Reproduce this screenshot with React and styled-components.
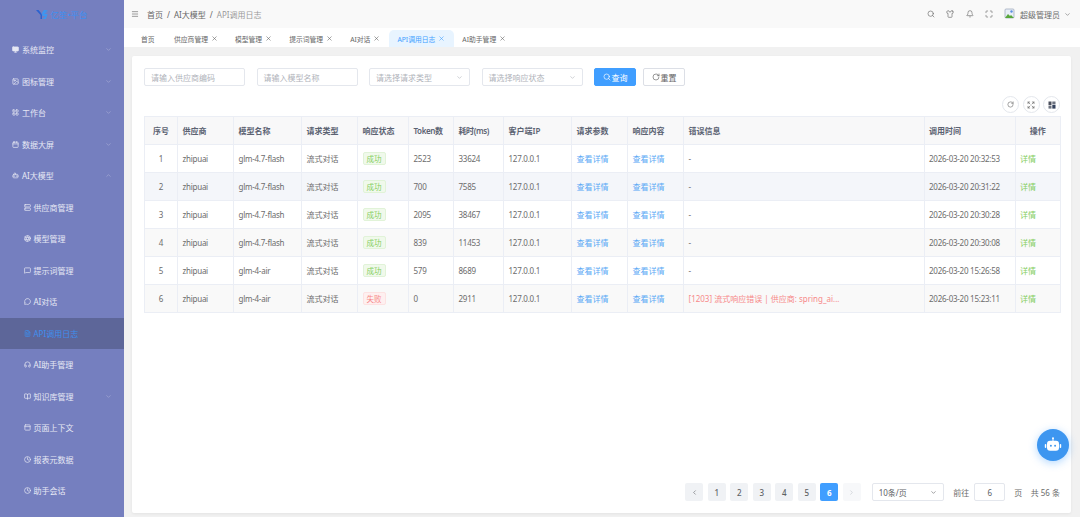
import React from 'react'
import styled, { createGlobalStyle } from 'styled-components'
import {
  Monitor, Image, LayoutGrid, Calendar, Bot, ChevronDown, ChevronUp, ChevronLeft, ChevronRight,
  Server, Aperture, MessageSquare, MessageCircle, FileText, Headphones, BookOpen, PanelTop,
  Clock, Search, Shirt, Bell, Maximize, RotateCw, X, Menu, Expand
} from 'lucide-react'

const GlobalStyle = createGlobalStyle`
  html, body { margin: 0; padding: 0; height: 100%; }
  body {
    font-family: "Noto Sans", "Noto Sans CJK SC", sans-serif;
    font-size: 8px;
    color: #6c6c6c;
    background: #f1f1f1;
    overflow: hidden;
  }
  * { box-sizing: border-box; }
`

const Page = styled.div`
  display: flex;
  width: 1080px;
  height: 517px;
`

const Sidebar = styled.aside`
  width: 124px;
  flex: none;
  background: #757fbf;
  color: #e6e8f4;
`

const Logo = styled.div`
  height: 34px;
  display: flex;
  align-items: center;
  justify-content: center;
  gap: 2px;
  padding-bottom: 6px;
  color: #3d8ff0;
  font-size: 8.5px;
`

const MenuRow = styled.div`
  height: 31.5px;
  display: flex;
  align-items: center;
  gap: 3px;
  padding-left: ${p => (p.$child ? 23.5 : 12)}px;
  padding-right: 12px;
  background: ${p => (p.$active ? '#5d6699' : 'transparent')};
  color: ${p => (p.$active ? '#3d8ff0' : '#e6e8f4')};
`

const MenuLabel = styled.span`
  flex: 1;
  white-space: nowrap;
`

const FilledMonitor = styled(Monitor)`
  fill: currentColor;
`

const Main = styled.div`
  flex: 1;
  min-width: 0;
  display: flex;
  flex-direction: column;
`

const Header = styled.header`
  height: 28px;
  flex: none;
  background: #f9f9f9;
  display: flex;
  align-items: center;
  padding: 0 9px 0 7px;
`

const Crumbs = styled.div`
  display: flex;
  align-items: center;
  gap: 4px;
  margin-left: 8px;
  flex: 1;
`

const Crumb = styled.span`
  color: ${p => (p.$last ? '#999' : '#666')};
`

const HeadIcons = styled.div`
  display: flex;
  align-items: center;
  gap: 11.5px;
  margin-right: 11px;
`

const User = styled.div`
  display: flex;
  align-items: center;
  gap: 4px;
`

const Tabs = styled.nav`
  height: 19px;
  flex: none;
  background: #fff;
  display: flex;
  align-items: flex-end;
  padding-left: 8.5px;
  font-size: 6.8px;
`

const Tab = styled.div`
  height: 17px;
  min-width: 33px;
  display: flex;
  align-items: center;
  gap: 3px;
  padding: 0 8.5px;
  white-space: nowrap;
  border-radius: 5px 5px 0 0;
  background: ${p => (p.$active ? '#e8f4ff' : 'transparent')};
  color: ${p => (p.$active ? '#409eff' : '#666')};
`

const Card = styled.main`
  height: 457px;
  margin: 9px 9px 0 8px;
  padding: 12px 11px 12px 12px;
  background: #fff;
  border-radius: 2px;
  box-shadow: 0 1px 3px rgba(0, 0, 0, 0.06);
  display: flex;
  flex-direction: column;
`

const Filters = styled.div`
  display: flex;
  gap: 11.5px;
  height: 18px;
`

const Field = styled.div`
  width: 101px;
  height: 18px;
  display: flex;
  align-items: center;
  justify-content: space-between;
  padding: 0 6px;
  border: 1px solid #e4e7ed;
  border-radius: 2px;
  color: #b0b3ba;
`

const Button = styled.button`
  height: 18px;
  width: 42px;
  padding: 0;
  display: flex;
  align-items: center;
  justify-content: center;
  gap: 1px;
  font: inherit;
  border-radius: 2px;
  border: 1px solid ${p => (p.$primary ? '#409eff' : '#dcdfe6')};
  background: ${p => (p.$primary ? '#409eff' : '#fff')};
  color: ${p => (p.$primary ? '#fff' : '#666')};
`

const ResetButton = styled(Button)`
  margin-left: -4.5px;
`

const Tools = styled.div`
  display: flex;
  justify-content: flex-end;
  gap: 3.5px;
  margin-top: 10px;
`

const ToolButton = styled.div`
  width: 17px;
  height: 17px;
  border: 1px solid #e4e7ed;
  border-radius: 50%;
  display: flex;
  align-items: center;
  justify-content: center;
  color: #666;
`

const Table = styled.table`
  width: 916px;
  margin-top: 2.5px;
  border-collapse: collapse;
  table-layout: fixed;
`

const Th = styled.th`
  height: 28px;
  padding: 0 4.5px;
  background: #f8f8f9;
  border: 1px solid #ebeef5;
  color: #5b6272;
  font-weight: 600;
  letter-spacing: ${p => (p.$tight ? '-0.4px' : '0')};
  text-align: ${p => (p.$center ? 'center' : 'left')};
`

const Row = styled.tr`
  background: ${p => (p.$tone === 'blue' ? '#f4f6fa' : p.$tone === 'grey' ? '#f9f9f9' : '#fff')};
`

const Td = styled.td`
  height: 28px;
  padding: 0 4.5px;
  border: 1px solid #ebeef5;
  color: ${p => p.$color || '#6c6c6c'};
  letter-spacing: ${p => (p.$tight ? '-0.25px' : '0')};
  text-align: ${p => (p.$center ? 'center' : 'left')};
  white-space: nowrap;
  overflow: hidden;
`

const Tag = styled.span`
  display: inline-block;
  width: 23px;
  height: 13px;
  line-height: 12px;
  text-align: center;
  border-radius: 2px;
  font-size: 7.5px;
  background: ${p => (p.$fail ? '#fef0f0' : '#f0f9eb')};
  border: 1px solid ${p => (p.$fail ? '#fde2e2' : '#e1f3d8')};
  color: ${p => (p.$fail ? '#f78989' : '#85ce61')};
`

const Pager = styled.div`
  margin-top: auto;
  display: flex;
  align-items: center;
  justify-content: flex-end;
  height: 18px;
`

const PageButtons = styled.div`
  display: flex;
  gap: 4.5px;
  margin-right: 11px;
`

const PageBtn = styled.div`
  width: 18px;
  height: 18px;
  display: flex;
  align-items: center;
  justify-content: center;
  border-radius: 2px;
  font-weight: ${p => (p.$active ? 700 : 500)};
  background: ${p => (p.$active ? '#409eff' : p.$disabled ? '#f7f8fa' : '#f0f2f5')};
  color: ${p => (p.$active ? '#fff' : p.$disabled ? '#c0c4cc' : '#606266')};
`

const SizeSelect = styled(Field)`
  width: 72.5px;
  color: #606266;
  margin-right: 9px;
`

const JumpInput = styled(Field)`
  width: 31px;
  justify-content: center;
  color: #606266;
  margin: 0 9px 0 5px;
`

const TotalText = styled.span`
  margin-left: 8.5px;
`

const Fab = styled.div`
  position: absolute;
  left: 1037px;
  top: 429px;
  width: 32px;
  height: 32px;
  border-radius: 50%;
  background: #3d96f0;
  box-shadow: 0 2px 8px rgba(64, 158, 255, 0.4);
  display: flex;
  align-items: center;
  justify-content: center;
`

const columns = [
  ['序号', 33, true], ['供应商', 56], ['模型名称', 68], ['请求类型', 56], ['响应状态', 51],
  ['Token数', 45, false, true], ['耗时(ms)', 50, false, true], ['客户端IP', 68], ['请求参数', 56], ['响应内容', 56],
  ['错误信息', 240.5], ['调用时间', 91], ['操作', 45.5, true]
]

const rows = [
  ['glm-4.7-flash', 2523, 33624, '-', '2026-03-20 20:32:53'],
  ['glm-4.7-flash', 700, 7585, '-', '2026-03-20 20:31:22'],
  ['glm-4.7-flash', 2095, 38467, '-', '2026-03-20 20:30:28'],
  ['glm-4.7-flash', 839, 11453, '-', '2026-03-20 20:30:08'],
  ['glm-4-air', 579, 8689, '-', '2026-03-20 15:26:58'],
  ['glm-4-air', 0, 2911, '[1203] 流式响应错误 | 供应商: spring_ai...', '2026-03-20 15:23:11']
]

const menu = [
  [FilledMonitor, '系统监控', 'down'],
  [Image, '图标管理', 'down'],
  [LayoutGrid, '工作台', 'down'],
  [Calendar, '数据大屏', 'down'],
  [Bot, 'AI大模型', 'up'],
  [Server, '供应商管理', null, true],
  [Aperture, '模型管理', null, true],
  [MessageSquare, '提示词管理', null, true],
  [MessageCircle, 'AI对话', null, true],
  [FileText, 'API调用日志', null, true, true],
  [Headphones, 'AI助手管理', null, true],
  [BookOpen, '知识库管理', 'down', true],
  [PanelTop, '页面上下文', null, true],
  [Clock, '报表元数据', null, true],
  [Clock, '助手会话', null, true]
]

const tabs = [
  ['首页'], ['供应商管理', true], ['模型管理', true], ['提示词管理', true],
  ['AI对话', true], ['API调用日志', true, true], ['AI助手管理', true]
]

function LogoMark() {
  return (
    <svg width="12" height="9" viewBox="0 0 12 9">
      <path d="M0 0h2.5l2.5 3 1 2v4H4.5V5z" fill="#2b62cf" />
      <path d="M6 3l2-3h4L9 1.5h3L8 4h3.5L10 9H6.5l3-3H6.5z" fill="#3d96f0" />
    </svg>
  )
}

function BrokenImage() {
  return (
    <svg width="12" height="13" viewBox="0 0 12 13">
      <rect x="1" y="1" width="9" height="9" rx="1" fill="#e8eef8" stroke="#9aa5b8" strokeWidth="0.7" />
      <path d="M1 10l3-4 2 2 1-1 3 3z" fill="#58a73c" />
      <circle cx="7.5" cy="3.5" r="1.2" fill="#5b8fe0" />
    </svg>
  )
}

function ColumnsIcon() {
  return (
    <svg width="8" height="8" viewBox="0 0 8 8">
      <rect x="0.5" y="0.5" width="3" height="3.5" fill="#4a4f5c" />
      <rect x="0.5" y="4.6" width="3" height="3" fill="#6d7380" />
      <rect x="4.3" y="0.5" width="3.2" height="2.6" fill="#6d7380" />
      <rect x="4.3" y="3.7" width="3.2" height="3.9" fill="#33415c" />
    </svg>
  )
}

function RobotIcon() {
  return (
    <svg width="18" height="18" viewBox="0 0 18 18">
      <circle cx="9" cy="2.2" r="1" fill="#fff" />
      <rect x="8.5" y="2.5" width="1" height="2.5" fill="#fff" />
      <rect x="3" y="4.8" width="12" height="10" rx="3" fill="#fff" />
      <rect x="0.8" y="8" width="1.5" height="4" rx="0.75" fill="#fff" />
      <rect x="15.7" y="8" width="1.5" height="4" rx="0.75" fill="#fff" />
      <circle cx="6.9" cy="9.8" r="0.95" fill="#3d96f0" />
      <circle cx="11.1" cy="9.8" r="0.95" fill="#3d96f0" />
    </svg>
  )
}

export default function App() {
  return (
    <Page>
      <GlobalStyle />
      <Sidebar>
        <Logo><LogoMark />亿笙•平台</Logo>
        {menu.map(([Icon, label, arrow, child, active]) => (
          <MenuRow key={label} $child={child} $active={active}>
            <Icon size={7} strokeWidth={2.4} />
            <MenuLabel>{label}</MenuLabel>
            {arrow === 'down' && <ChevronDown size={7} color="#aab0d8" />}
            {arrow === 'up' && <ChevronUp size={7} color="#aab0d8" />}
          </MenuRow>
        ))}
      </Sidebar>
      <Main>
        <Header>
          <Menu size={8} />
          <Crumbs>
            <Crumb>首页</Crumb><Crumb>/</Crumb><Crumb>AI大模型</Crumb><Crumb>/</Crumb><Crumb $last>API调用日志</Crumb>
          </Crumbs>
          <HeadIcons>
            <Search size={8} /><Shirt size={8} /><Bell size={8} /><Maximize size={8} />
          </HeadIcons>
          <User>
            <BrokenImage />
            超级管理员
            <ChevronDown size={7} />
          </User>
        </Header>
        <Tabs>
          {tabs.map(([label, closable, active]) => (
            <Tab key={label} $active={active}>
              {label}
              {closable && <X size={7} />}
            </Tab>
          ))}
        </Tabs>
        <Card>
          <Filters>
            <Field>请输入供应商编码</Field>
            <Field>请输入模型名称</Field>
            <Field>请选择请求类型<ChevronDown size={7} /></Field>
            <Field>请选择响应状态<ChevronDown size={7} /></Field>
            <Button $primary><Search size={8} />查询</Button>
            <ResetButton><RotateCw size={8} />重置</ResetButton>
          </Filters>
          <Tools>
            <ToolButton><RotateCw size={7} /></ToolButton>
            <ToolButton><Expand size={8} /></ToolButton>
            <ToolButton><ColumnsIcon /></ToolButton>
          </Tools>
          <Table>
            <colgroup>
              {columns.map(([name, width]) => <col key={name} width={width} />)}
            </colgroup>
            <thead>
              <tr>
                {columns.map(([name, , center, tight]) => <Th key={name} $center={center} $tight={tight}>{name}</Th>)}
              </tr>
            </thead>
            <tbody>
              {rows.map(([model, token, ms, err, time], i) => (
                <Row key={time} $tone={i === 1 ? 'blue' : i === 3 || i === 5 ? 'grey' : 'white'}>
                  <Td $center>{i + 1}</Td>
                  <Td $tight>zhipuai</Td>
                  <Td $tight>{model}</Td>
                  <Td>流式对话</Td>
                  <Td><Tag $fail={i === 5}>{i === 5 ? '失败' : '成功'}</Tag></Td>
                  <Td $tight>{token}</Td>
                  <Td $tight>{ms}</Td>
                  <Td $tight>127.0.0.1</Td>
                  <Td $color="#5aa9f5">查看详情</Td>
                  <Td $color="#5aa9f5">查看详情</Td>
                  <Td $color={i === 5 ? '#f78989' : '#6c6c6c'}>{err}</Td>
                  <Td $tight>{time}</Td>
                  <Td $color="#85ce61">详情</Td>
                </Row>
              ))}
            </tbody>
          </Table>
          <Pager>
            <PageButtons>
              <PageBtn><ChevronLeft size={7} /></PageBtn>
              {[1, 2, 3, 4, 5, 6].map(n => <PageBtn key={n} $active={n === 6}>{n}</PageBtn>)}
              <PageBtn $disabled><ChevronRight size={7} /></PageBtn>
            </PageButtons>
            <SizeSelect>10条/页<ChevronDown size={7} /></SizeSelect>
            前往
            <JumpInput>6</JumpInput>
            页
            <TotalText>共 56 条</TotalText>
          </Pager>
        </Card>
      </Main>
      <Fab><RobotIcon /></Fab>
    </Page>
  )
}
